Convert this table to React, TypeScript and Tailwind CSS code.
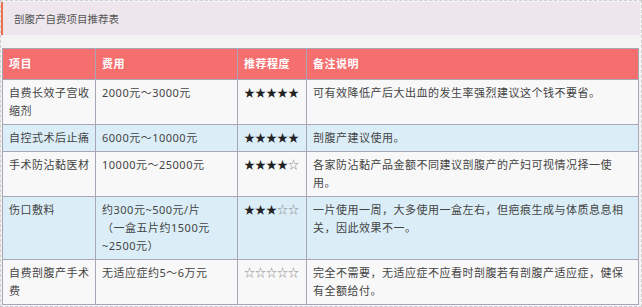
const rows = [
  {
    item: "自费长效子宫收缩剂",
    cost: ["2000元～3000元"],
    full: 5,
    note: "可有效降低产后大出血的发生率强烈建议这个钱不要省。",
  },
  {
    item: "自控式术后止痛",
    cost: ["6000元～10000元"],
    full: 5,
    note: "剖腹产建议使用。",
  },
  {
    item: "手术防沾黏医材",
    cost: ["10000元～25000元"],
    full: 4,
    note: "各家防沾黏产品金额不同建议剖腹产的产妇可视情况择一使\n用。",
  },
  {
    item: "伤口敷料",
    cost: ["约300元~500元/片", "（一盒五片约1500元", "~2500元）"],
    full: 3,
    note: "一片使用一周，大多使用一盒左右，但疤痕生成与体质息息相关，因此效果不一。",
  },
  {
    item: "自费剖腹产手术费",
    cost: ["无适应症约5～6万元"],
    full: 0,
    note: "完全不需要，无适应症不应看时剖腹若有剖腹产适应症，健保有全额给付。",
  },
];

function Stars({ full }: { full: number }) {
  return (
    <span className="tracking-[0px]">
      <span className="text-[#222]">{"★".repeat(full)}</span>
      <span className="text-[#888]">{"☆".repeat(5 - full)}</span>
    </span>
  );
}

export default function App() {
  const cell = "border border-[#a6a6b6] pl-[6px] pr-[4px] py-[4px] align-top";
  const noteCell = "border border-[#a6a6b6] pl-[6px] pr-[8px] py-[4px] align-top whitespace-pre-line";
  const head = "border border-[#a6a6b6] pl-[6px] pr-[4px] py-[6px] text-left font-bold text-white";

  return (
    <div
      className="w-[642px] h-[307px] overflow-hidden border border-dashed border-[#cfcfcf] bg-[#f3f3f3] text-[11px] leading-[18px] tracking-[0.5px] text-[#444]"
      style={{ fontFamily: '"Noto Sans", "Noto Sans CJK SC", sans-serif' }}
    >
      <div className="mt-[1px] mr-[1px] h-[33px] flex items-center border-l-2 border-[#f0704e] bg-[#ede6ec] pl-[11px] text-[10.5px] tracking-[0px] text-[#555]">
        剖腹产自费项目推荐表
      </div>

      <table className="mt-[13px] ml-[1px] w-[636px] table-fixed border-collapse">
        <colgroup>
          <col className="w-[93px]" />
          <col className="w-[142px]" />
          <col className="w-[69px]" />
          <col className="w-[332px]" />
        </colgroup>
        <thead>
          <tr className="bg-[#f66f6f]">
            <th className={head}>项目</th>
            <th className={head}>费用</th>
            <th className={head}>推荐程度</th>
            <th className={head}>备注说明</th>
          </tr>
        </thead>
        <tbody>
          {rows.map((r, i) => (
            <tr key={r.item} className={i % 2 === 0 ? "bg-[#f8f8f8]" : "bg-[#dbeef8]"}>
              <td className={cell}>{r.item}</td>
              <td className={cell}>
                {r.cost.map((c, j) => (
                  <div key={j}>{c}</div>
                ))}
              </td>
              <td className={cell}>
                <Stars full={r.full} />
              </td>
              <td className={noteCell}>{r.note}</td>
            </tr>
          ))}
        </tbody>
      </table>
    </div>
  );
}
